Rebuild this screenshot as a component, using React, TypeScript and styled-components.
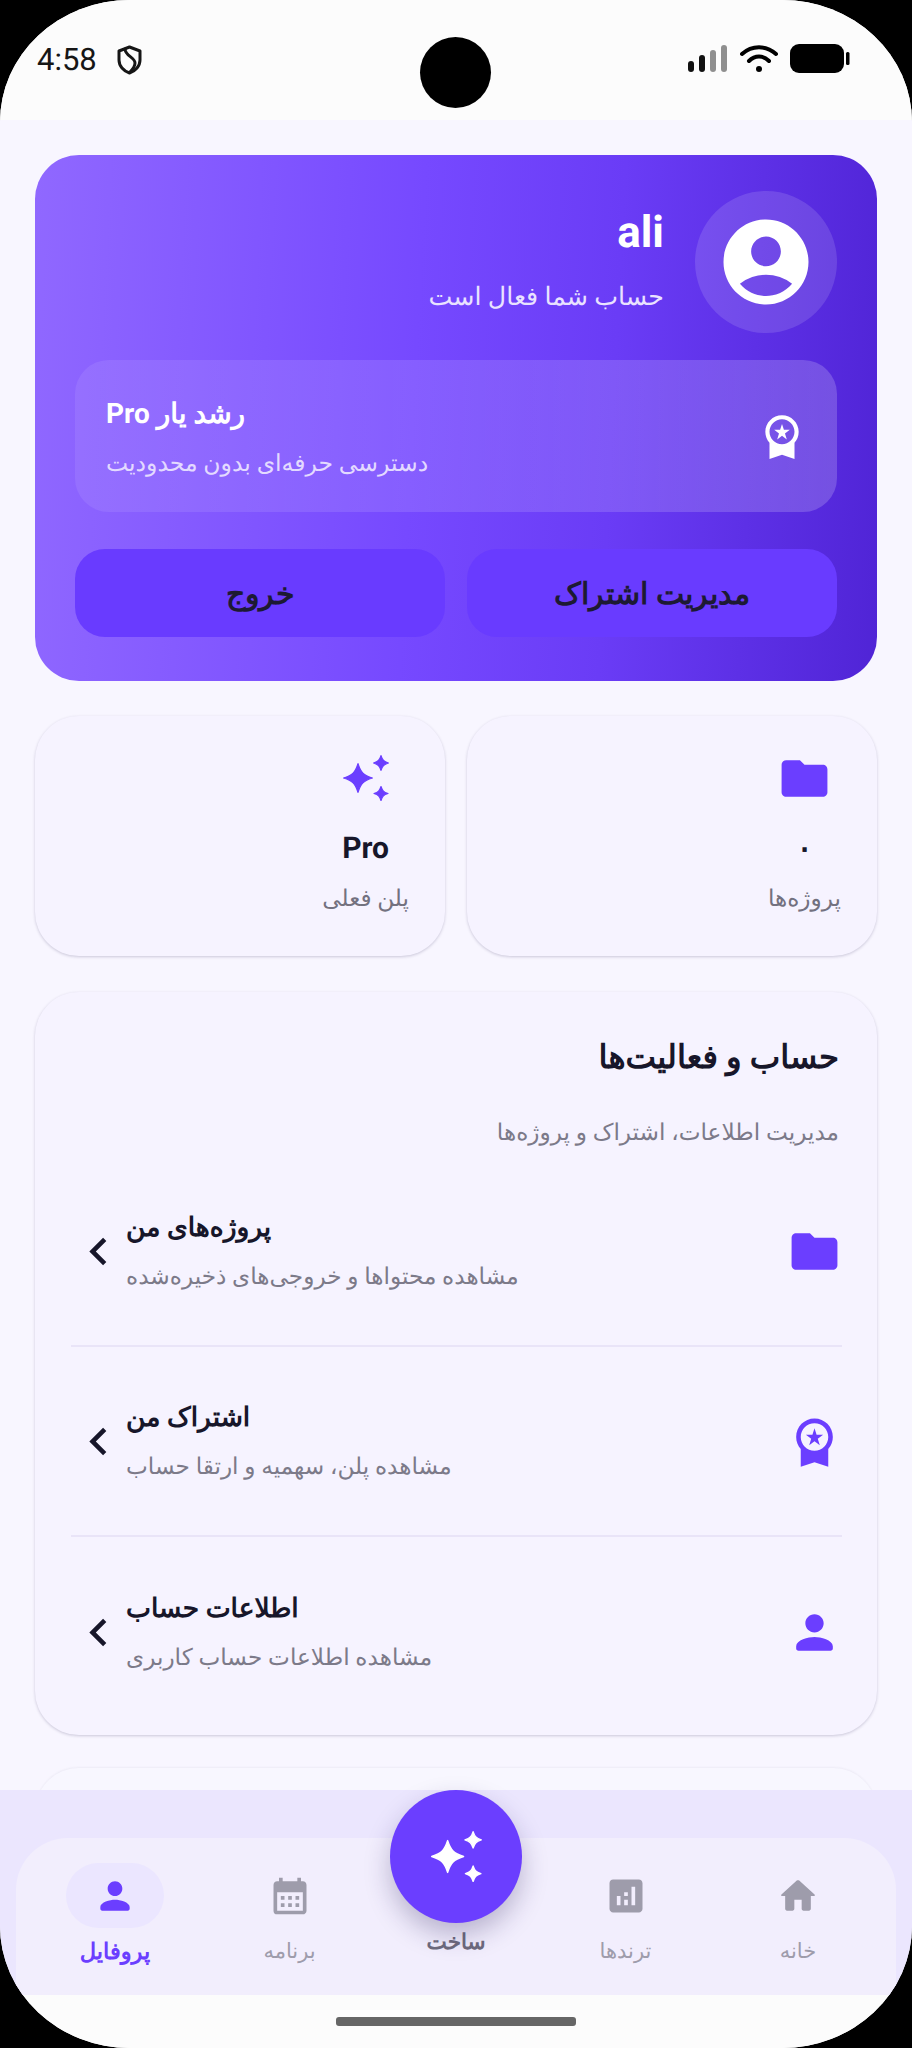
import React from "react";
import styled, { createGlobalStyle } from "styled-components";
import {
  MdFolder,
  MdWorkspacePremium,
  MdAccountCircle,
  MdCalendarMonth,
  MdAnalytics,
  MdChevronLeft,
} from "react-icons/md";

const FONT = `Roboto, "Noto Sans", sans-serif`;

const Global = createGlobalStyle`
  html, body { margin: 0; padding: 0; background: #000; }
  * { box-sizing: border-box; }
  body { font-family: ${FONT}; text-rendering: geometricPrecision; }
`;

const Phone = styled.div`
  position: relative;
  width: 912px;
  height: 2048px;
  background: #fcfcfc;
  border-radius: 130px / 122px;
  overflow: hidden;
  display: flex;
  flex-direction: column;
  direction: rtl;
`;

const StatusBar = styled.div`
  direction: ltr;
  flex: 0 0 120px;
  background: #fcfcfc;
  display: flex;
  align-items: flex-start;
  justify-content: space-between;
  padding: 44px 62px 0 37px;
`;

const StatusLeft = styled.div`
  display: flex;
  align-items: center;
  gap: 20px;
`;

const Clock = styled.span`
  font-size: 31px;
  line-height: 32px;
  color: #161616;
`;

const StatusRight = styled.div`
  display: flex;
  align-items: center;
  gap: 12px;
`;

const Camera = styled.div`
  position: absolute;
  left: 420px;
  top: 37px;
  width: 71px;
  height: 71px;
  border-radius: 50%;
  background: #000;
`;

const Content = styled.main`
  flex: 1 1 0;
  min-height: 0;
  overflow: hidden;
  background: #f8f6ff;
  padding: 35px 35px 0;
  display: flex;
  flex-direction: column;
`;

const Hero = styled.section`
  flex: none;
  height: 526px;
  border-radius: 44px;
  background: linear-gradient(93deg, #9068ff 0%, #7649ff 45%, #6a3cf6 68%, #5024d6 100%);
  padding: 36px 40px 0;
  display: flex;
  flex-direction: column;
`;

const HeroTop = styled.div`
  display: flex;
  align-items: center;
  gap: 31px;
  height: 142px;
`;

const Avatar = styled.div`
  flex: none;
  width: 142px;
  height: 142px;
  border-radius: 50%;
  background: rgba(255, 255, 255, 0.13);
  color: #fff;
  display: flex;
  align-items: center;
  justify-content: center;
`;

const HeroNames = styled.div`
  display: flex;
  flex-direction: column;
  gap: 21px;
`;

const HeroName = styled.div`
  font-size: 44px;
  line-height: 50px;
  font-weight: 700;
  color: #fff;
`;

const HeroSub = styled.div`
  font-size: 25.3px;
  line-height: 40px;
  color: #e9e2ff;
`;

const ProBox = styled.div`
  margin-top: 27px;
  height: 152px;
  border-radius: 34px;
  background: linear-gradient(90deg, rgba(255, 255, 255, 0.08) 0%, rgba(255, 255, 255, 0.13) 60%, rgba(255, 255, 255, 0.19) 100%);
  padding: 0 30px 0 31px;
  display: flex;
  align-items: center;
  justify-content: space-between;
  color: #fff;
`;

const ProText = styled.div`
  display: flex;
  flex-direction: column;
  align-items: flex-end;
  gap: 14px;
  padding-top: 4px;
`;

const ProTitle = styled.div`
  font-size: 28px;
  line-height: 36px;
  font-weight: 700;
  color: #fff;
`;

const ProSub = styled.div`
  font-size: 23.5px;
  line-height: 34px;
  color: #e3daff;
`;

const HeroButtons = styled.div`
  margin-top: 37px;
  display: grid;
  grid-template-columns: 1fr 1fr;
  gap: 22px;
`;

const HeroButton = styled.button`
  height: 88px;
  border: 0;
  border-radius: 30px;
  background: #693bff;
  color: #1d1a33;
  font-family: ${FONT};
  font-size: 29.7px;
  font-weight: 700;
`;

const Stats = styled.div`
  flex: none;
  margin-top: 35px;
  display: grid;
  grid-template-columns: 1fr 1fr;
  gap: 22px;
`;

const StatCard = styled.div`
  height: 240px;
  border-radius: 44px;
  background: #f6f3ff;
  box-shadow: 0 1px 3px rgba(40, 30, 80, 0.22);
  padding: 34px 36px 0;
  display: flex;
  flex-direction: column;
  align-items: flex-start;
`;

const StatInner = styled.div`
  display: flex;
  flex-direction: column;
  align-items: center;
  color: #6b3eff;
`;

const StatIcon = styled.div`
  height: 56px;
  display: flex;
  align-items: center;
  justify-content: center;
`;

const StatValue = styled.div`
  margin-top: 25px;
  font-size: 30px;
  line-height: 36px;
  font-weight: 700;
  color: #17162a;
`;

const StatLabel = styled.div`
  margin-top: 13px;
  font-size: 23.2px;
  line-height: 36px;
  color: #73717f;
`;

const ListCard = styled.section`
  flex: none;
  margin-top: 36px;
  height: 743px;
  border-radius: 44px;
  background: #f6f3ff;
  box-shadow: 0 1px 3px rgba(40, 30, 80, 0.22);
  padding: 44px 35px 0 36px;
`;

const ListTitle = styled.h2`
  margin: 0;
  padding-right: 3px;
  font-size: 32.4px;
  line-height: 42px;
  font-weight: 700;
  color: #17162a;
`;

const ListSub = styled.p`
  margin: 36px 0 7px;
  padding-right: 3px;
  font-size: 23.2px;
  line-height: 36px;
  color: #7c7a89;
`;

const Row = styled.div<{ $last?: boolean }>`
  height: 190px;
  display: flex;
  align-items: center;
  justify-content: space-between;
  border-bottom: ${(p) => (p.$last ? "0" : "2px solid #e9e4f8")};
  color: #6b3eff;
`;

const RowIcon = styled.div`
  flex: none;
  width: 55px;
  height: 55px;
`;

const RowEnd = styled.div`
  display: flex;
  align-items: center;
`;

const RowText = styled.div`
  display: flex;
  flex-direction: column;
  align-items: flex-end;
  gap: 12px;
`;

const RowTitle = styled.div`
  font-size: 26.5px;
  line-height: 38px;
  font-weight: 700;
  color: #17162a;
`;

const RowSub = styled.div`
  font-size: 23.2px;
  line-height: 34px;
  color: #7c7a89;
`;

const Chevron = styled.div`
  flex: none;
  width: 55px;
  height: 55px;
  color: #17162a;
`;

const PeekCard = styled.div`
  flex: none;
  margin-top: 33px;
  height: 200px;
  border-radius: 44px;
  background: #f8f7ff;
  box-shadow: 0 -1px 2px rgba(40, 30, 80, 0.05);
`;

const NavBand = styled.nav`
  position: relative;
  flex: 0 0 205px;
  background: #ebe6fe;
  padding: 48px 16px 0;
`;

const NavBar = styled.div`
  height: 157px;
  border-radius: 52px 52px 0 0;
  background: #f2eefd;
  padding-right: 11px;
  display: grid;
  grid-template-columns: 174px 171px 168px 165px 184px;
  justify-content: start;
`;

const NavItem = styled.div<{ $active?: boolean }>`
  display: flex;
  flex-direction: column;
  align-items: center;
  padding-top: 25px;
  color: ${(p) => (p.$active ? "#6b3eff" : "#9e9cab")};
`;

const NavIcon = styled.div<{ $active?: boolean }>`
  width: 98px;
  height: 65px;
  border-radius: 33px;
  background: ${(p) => (p.$active ? "#ebe6ff" : "transparent")};
  display: flex;
  align-items: center;
  justify-content: center;
`;

const NavLabel = styled.div<{ $active?: boolean }>`
  margin-top: 5px;
  font-size: ${(p) => (p.$active ? "22.5px" : "21px")};
  line-height: 38px;
  font-weight: ${(p) => (p.$active ? 700 : 400)};
`;

const FabLabel = styled.div`
  margin-top: 63px;
  font-size: 21.5px;
  line-height: 34px;
  font-weight: 700;
  color: #6e6b7d;
`;

const Fab = styled.div`
  position: absolute;
  left: 390px;
  top: 0;
  width: 132px;
  height: 133px;
  border-radius: 50%;
  background: #6b3eff;
  color: #fff;
  box-shadow: 0 12px 26px rgba(40, 30, 90, 0.28);
  display: flex;
  align-items: center;
  justify-content: center;
`;

const HomeBar = styled.div`
  flex: 0 0 53px;
  background: #fcfcfc;
  padding-top: 22px;
  display: flex;
  justify-content: center;
`;

const HomeIndicator = styled.div`
  width: 240px;
  height: 9px;
  border-radius: 3px;
  background: #666;
`;

function star(cx: number, cy: number, r: number) {
  const k = 0.2 * r;
  const m = 0.38 * r;
  return [
    `M${cx} ${cy - r}`,
    `C${cx + k} ${cy - m} ${cx + m} ${cy - k} ${cx + r} ${cy}`,
    `C${cx + m} ${cy + k} ${cx + k} ${cy + m} ${cx} ${cy + r}`,
    `C${cx - k} ${cy + m} ${cx - m} ${cy + k} ${cx - r} ${cy}`,
    `C${cx - m} ${cy - k} ${cx - k} ${cy - m} ${cx} ${cy - r}Z`,
  ].join("");
}

const Sparkles = ({ size }: { size: number }) => (
  <svg width={size} height={size} viewBox="0 0 46 46" fill="currentColor" stroke="currentColor" strokeWidth="1.2" strokeLinejoin="round">
    <path d={star(15, 23, 14.4)} />
    <path d={star(38, 8, 7.4)} />
    <path d={star(38, 38.5, 7)} />
  </svg>
);

const HomeRounded = ({ size }: { size: number }) => (
  <svg width={size} height={size} viewBox="0 0 24 24" fill="currentColor">
    <path d="M10 19v-5h4v5c0 .55.45 1 1 1h3c.55 0 1-.45 1-1v-7h1.7c.46 0 .68-.57.33-.87L12.67 3.6c-.38-.34-.96-.34-1.34 0l-8.36 7.53c-.34.3-.13.87.33.87H5v7c0 .55.45 1 1 1h3c.55 0 1-.45 1-1z" />
  </svg>
);

const PersonRounded = ({ size }: { size: number }) => (
  <svg width={size} height={size} viewBox="0 0 24 24" fill="currentColor">
    <path d="M12 12c2.21 0 4-1.79 4-4s-1.79-4-4-4-4 1.79-4 4 1.79 4 4 4zm0 2c-2.67 0-8 1.34-8 4v1c0 .55.45 1 1 1h14c.55 0 1-.45 1-1v-1c0-2.66-5.33-4-8-4z" />
  </svg>
);

const Shield = () => (
  <svg width="25" height="30" viewBox="0 0 25 30" fill="none" stroke="#161616" strokeWidth="3" strokeLinejoin="round" strokeLinecap="round">
    <path d="M12.5 2 L23 6 V15 C23 21 18.5 26 12.5 28 C6.5 26 2 21 2 15 V6 Z" />
    <path d="M8 4 C8 11 18 12 18 18 C18 22 15 25 13 27" />
  </svg>
);

const Signal = () => (
  <svg width="40" height="28" viewBox="0 0 40 28">
    <rect x="0" y="16" width="6" height="11" rx="3" fill="#111" />
    <rect x="11" y="10" width="6" height="17" rx="3" fill="#111" />
    <rect x="22" y="5" width="6" height="22" rx="3" fill="#8f8f8f" />
    <rect x="33" y="0" width="6" height="27" rx="3" fill="#8f8f8f" />
  </svg>
);

const Wifi = () => (
  <svg width="38" height="28" viewBox="0 0 38 28" fill="none" stroke="#000" strokeWidth="4" strokeLinecap="round">
    <path d="M2 9 C12 0 26 0 36 9" />
    <path d="M9 16 C15 10 23 10 29 16" />
    <circle cx="19" cy="24" r="3" fill="#000" stroke="none" />
  </svg>
);

const Battery = () => (
  <svg width="60" height="30" viewBox="0 0 60 30">
    <rect x="0" y="0" width="54" height="29" rx="9" fill="#000" />
    <rect x="56" y="8" width="3.5" height="13" rx="1.5" fill="#000" />
  </svg>
);

const rows = [
  { icon: <MdFolder size={55} />, title: "پروژه‌های من", sub: "مشاهده محتواها و خروجی‌های ذخیره‌شده" },
  { icon: <MdWorkspacePremium size={55} />, title: "اشتراک من", sub: "مشاهده پلن، سهمیه و ارتقا حساب" },
  { icon: <PersonRounded size={55} />, title: "اطلاعات حساب", sub: "مشاهده اطلاعات حساب کاربری" },
];

export default function App() {
  return (
    <>
      <Global />
      <Phone>
        <StatusBar>
          <StatusLeft>
            <Clock>4:58</Clock>
            <Shield />
          </StatusLeft>
          <StatusRight>
            <Signal />
            <Wifi />
            <Battery />
          </StatusRight>
        </StatusBar>
        <Camera />
        <Content>
          <Hero>
            <HeroTop>
              <Avatar>
                <MdAccountCircle size={102} />
              </Avatar>
              <HeroNames>
                <HeroName>ali</HeroName>
                <HeroSub>حساب شما فعال است</HeroSub>
              </HeroNames>
            </HeroTop>
            <ProBox>
              <MdWorkspacePremium size={50} />
              <ProText>
                <ProTitle>رشد یار Pro</ProTitle>
                <ProSub>دسترسی حرفه‌ای بدون محدودیت</ProSub>
              </ProText>
            </ProBox>
            <HeroButtons>
              <HeroButton>مدیریت اشتراک</HeroButton>
              <HeroButton>خروج</HeroButton>
            </HeroButtons>
          </Hero>
          <Stats>
            <StatCard>
              <StatInner>
                <StatIcon>
                  <MdFolder size={55} />
                </StatIcon>
                <StatValue>۰</StatValue>
                <StatLabel>پروژه‌ها</StatLabel>
              </StatInner>
            </StatCard>
            <StatCard>
              <StatInner>
                <StatIcon>
                  <Sparkles size={46} />
                </StatIcon>
                <StatValue>Pro</StatValue>
                <StatLabel>پلن فعلی</StatLabel>
              </StatInner>
            </StatCard>
          </Stats>
          <ListCard>
            <ListTitle>حساب و فعالیت‌ها</ListTitle>
            <ListSub>مدیریت اطلاعات، اشتراک و پروژه‌ها</ListSub>
            {rows.map((r, i) => (
              <Row key={r.title} $last={i === rows.length - 1}>
                <RowIcon>{r.icon}</RowIcon>
                <RowEnd>
                  <RowText>
                    <RowTitle>{r.title}</RowTitle>
                    <RowSub>{r.sub}</RowSub>
                  </RowText>
                  <Chevron>
                    <MdChevronLeft size={55} />
                  </Chevron>
                </RowEnd>
              </Row>
            ))}
          </ListCard>
          <PeekCard />
        </Content>
        <NavBand>
          <NavBar>
            <NavItem>
              <NavIcon>
                <HomeRounded size={44} />
              </NavIcon>
              <NavLabel>خانه</NavLabel>
            </NavItem>
            <NavItem>
              <NavIcon>
                <MdAnalytics size={44} />
              </NavIcon>
              <NavLabel>ترندها</NavLabel>
            </NavItem>
            <NavItem>
              <FabLabel>ساخت</FabLabel>
            </NavItem>
            <NavItem>
              <NavIcon>
                <MdCalendarMonth size={44} />
              </NavIcon>
              <NavLabel>برنامه</NavLabel>
            </NavItem>
            <NavItem $active>
              <NavIcon $active>
                <PersonRounded size={44} />
              </NavIcon>
              <NavLabel $active>پروفایل</NavLabel>
            </NavItem>
          </NavBar>
          <Fab>
            <Sparkles size={51} />
          </Fab>
        </NavBand>
        <HomeBar>
          <HomeIndicator />
        </HomeBar>
      </Phone>
    </>
  );
}
